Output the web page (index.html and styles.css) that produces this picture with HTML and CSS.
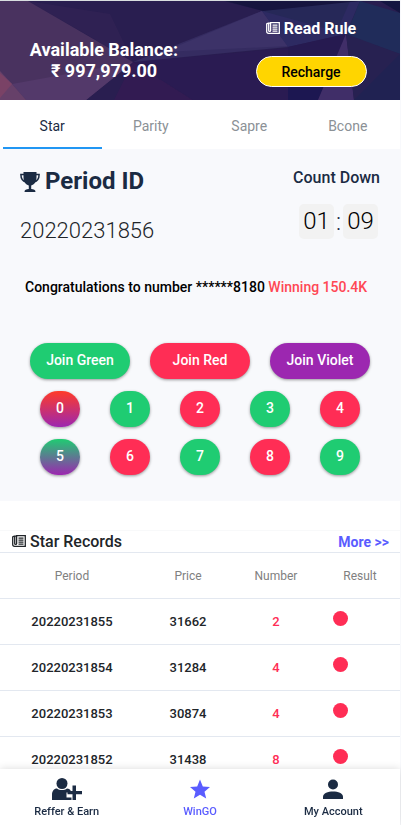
FILE: index.html
```html
<!DOCTYPE html>
<html lang="en">
<head>
<meta charset="utf-8">
<meta name="viewport" content="width=device-width, initial-scale=1">
<title>WinGO</title>
<link rel="stylesheet" href="styles.css">
</head>
<body>
<svg class="sprite" aria-hidden="true">
  <symbol id="news" viewBox="0 0 14 12">
    <path fill="none" stroke="currentColor" stroke-width="1.300" d="M4.600 9V.7h8.700v10.600H2.500C1.300 11.300.7 10.500.7 9.500V2l1.500-.8h2.400M2.700 1.500v7c0 1.200 1.900 1.200 1.900 0"/>
    <path fill="none" stroke="currentColor" stroke-width="1.200" d="M6.500 3.200h5M6.500 5.200h5M6.500 7.200h5M6.500 9.200h5"/>
  </symbol>
</svg>
<header class="hero">
  <svg class="hero-art" viewBox="0 0 400 99" preserveAspectRatio="none" aria-hidden="true">
    <path fill="#291e50" d="M0 0h400v99H0z"/>
    <path fill="#49325f" d="M0 0h28l105 61-47 38H0z"/>
    <path fill="#3c295a" d="M28 0l56 32 49 29-23-48z" opacity=".35"/>
    <path fill="#53396a" d="M12 83l121-22-47 38H26z"/>
    <path fill="#664069" d="M0 70l12 13 14 16H0z"/>
    <path fill="#7a4266" d="M0 72l12 11-12 14z"/>
    <path fill="#321b52" d="M133 61l60 38h-79z"/>
    <path fill="#2a1b52" d="M133 61l155-14v52h-95z"/>
    <path fill="#352c61" d="M133 61L262 10l26 36z"/>
    <path fill="#3c3268" d="M163 51l99-41 26 35z"/>
    <path fill="#201b4b" d="M224 0h156l-117 10z"/>
    <path fill="#2d2a62" d="M262 10L360 0l-14 33-58 13z"/>
    <path fill="#262858" d="M262 10l84 23-6-10 10-23z"/>
    <path fill="#16153f" d="M226 0h134l-97 10z"/>
    <path fill="#202c5a" d="M360 0l40 12v41l-54-19z"/>
    <path fill="#141641" d="M380 0h20v12z"/>
    <path fill="#261a50" d="M288 46l58-13-28 66h-30z"/>
    <path fill="#1c1751" d="M288 60l42 10-12 29h-30z"/>
    <path fill="#402e68" d="M346 33l8 66h-36z"/>
    <path fill="#272151" d="M346 33l54 20v46h-46z"/>
    <path fill="#202252" d="M400 53v46h-46z"/>
  </svg>
  <div class="balance"><span>Available Balance:</span><span>₹ 997,979.00</span></div>
  <div class="hero-side">
    <a class="rule" href="#rule"><svg class="news"><use href="#news"/></svg>Read Rule</a>
    <button class="recharge" type="button">Recharge</button>
  </div>
</header>
<nav class="tabs">
  <a class="tab active" href="#star">Star</a>
  <a class="tab" href="#parity">Parity</a>
  <a class="tab" href="#sapre">Sapre</a>
  <a class="tab" href="#bcone">Bcone</a>
</nav>
<main>
  <section class="game">
    <div class="round">
      <div>
        <h1 class="period"><svg class="trophy" viewBox="0 0 20 20"><path fill="currentColor" d="M3.500 0h13v5.500c0 4-2.300 7.300-5.300 8V17c2.500 0 4.300.8 4.300 3h-11c0-2.200 1.800-3 4.300-3v-3.500c-3-.7-5.300-4-5.300-8z"/><path fill="none" stroke="currentColor" stroke-width="1.500" d="M4 2.600H.9C.9 6.500 2.500 9.200 6 10M16 2.600h3.100C19.100 6.500 17.500 9.200 14 10"/></svg>Period ID</h1>
        <p class="period-id">20220231856</p>
      </div>
      <div class="countdown">
        <h2>Count Down</h2>
        <div class="clock"><span>01</span>:<span>09</span></div>
      </div>
    </div>
    <p class="congrats">Congratulations to number ******8180 <span>Winning 150.4K</span></p>
    <div class="joins">
      <button class="chip green" type="button">Join Green</button>
      <button class="chip red" type="button">Join Red</button>
      <button class="chip violet" type="button">Join Violet</button>
    </div>
    <div class="numbers">
      <button class="chip red-violet" type="button">0</button>
      <button class="chip green" type="button">1</button>
      <button class="chip red" type="button">2</button>
      <button class="chip green" type="button">3</button>
      <button class="chip red" type="button">4</button>
      <button class="chip green-violet" type="button">5</button>
      <button class="chip red" type="button">6</button>
      <button class="chip green" type="button">7</button>
      <button class="chip red" type="button">8</button>
      <button class="chip green" type="button">9</button>
    </div>
  </section>
  <section class="records">
    <div class="records-head">
      <h2><svg class="news"><use href="#news"/></svg>Star Records</h2>
      <a href="#more">More &gt;&gt;</a>
    </div>
    <table>
      <thead><tr><th class="c-period">Period</th><th class="c-price">Price</th><th class="c-number">Number</th><th class="c-result">Result</th></tr></thead>
      <tbody>
        <tr><td>20220231855</td><td>31662</td><td class="num">2</td><td class="res"><span class="dot"></span></td></tr>
        <tr><td>20220231854</td><td>31284</td><td class="num">4</td><td class="res"><span class="dot"></span></td></tr>
        <tr><td>20220231853</td><td>30874</td><td class="num">4</td><td class="res"><span class="dot"></span></td></tr>
        <tr><td>20220231852</td><td>31438</td><td class="num">8</td><td class="res"><span class="dot"></span></td></tr>
      </tbody>
    </table>
  </section>
</main>
<nav class="bottom">
  <a href="#refer"><svg viewBox="0 0 30 24"><g fill="currentColor"><circle cx="10" cy="6.500" r="5.500"/><path d="M0 23v-5c0-4 2-6.500 5-6.500 2.500 2 7.500 2 10 0 1.500 0 2.800.7 3.800 2h-.3v2h-4v5h5V23z"/><path d="M20.500 8.500h3.500v5.500h6v3.200h-6V23h-3.500v-5.800h-5V14h5z"/></g></svg>Reffer &amp; Earn</a>
  <a class="on" href="#wingo"><svg viewBox="0 0 30 24"><path fill="currentColor" d="M15 2.500l2.800 6.900 7.200.6-5.500 4.800 1.700 6.700L15 17.800l-6.200 3.700 1.700-6.700L5 10l7.200-.6z"/></svg>WinGO</a>
  <a href="#account"><svg viewBox="0 0 30 24"><g fill="currentColor"><circle cx="15" cy="7.500" r="5"/><path d="M5 22v-2c0-4 5-5.500 10-5.500S25 16 25 20v2z"/></g></svg>My Account</a>
</nav>
</body>
</html>
```
FILE: styles.css
```css
* { box-sizing: border-box; }
body {
  margin: 0;
  padding-right: 1px;
  height: 100vh;
  overflow: hidden;
  background: linear-gradient(to left, #f8f9fc 1px, #fff 1px);
  color: #212529;
  font-family: Roboto, "Liberation Sans", sans-serif;
}
h1, h2, p { margin: 0; }
a { color: inherit; text-decoration: none; }
button { font-family: inherit; border: 0; padding: 0; cursor: pointer; }
.sprite { display: none; }
.news { width: 14px; height: 12px; margin-right: 4px; }

.hero {
  position: relative;
  display: flex;
  height: 100px;
  border-top: 1px solid #d9dee0;
  color: #fff;
}
.hero-art { position: absolute; inset: 0; width: 100%; height: 100%; }
.balance, .hero-side { position: relative; display: flex; flex-direction: column; align-items: center; }
.balance { flex: none; width: 52%; padding-top: 38px; font-size: 18px; line-height: 21px; font-weight: 700; }
.hero-side { flex: 1; padding: 18px 0 0 14px; gap: 17px; }
.rule { font-size: 16px; line-height: 20px; font-weight: 700; }
.recharge {
  width: 111px; height: 31px;
  border: 1px solid #fff; border-radius: 16px;
  background: #ffd500; color: #000;
  font-size: 14px; font-weight: 500;
}

.tabs { display: flex; padding: 0 3px; }
.tab {
  flex: 1;
  height: 49px;
  border-bottom: 2px solid transparent;
  text-align: center;
  font-size: 14px; line-height: 52px;
  color: #8b9196;
}
.tab.active { color: #1b2b43; border-color: #2196f3; }

.game { background: #f8f9fc; padding: 18px 20px 26px; }
.round { display: flex; justify-content: space-between; }
.period { display: flex; align-items: center; gap: 5px; color: #1b2b43; font-size: 24px; line-height: 29px; font-weight: 700; }
.trophy { width: 20px; height: 20px; }
.period-id { margin-top: 20px; font-size: 22px; line-height: 30px; font-weight: 300; color: #212529; }
.countdown { text-align: center; color: #1b2b43; }
.countdown h2 { font-size: 16px; line-height: 21px; font-weight: 500; }
.clock { display: flex; justify-content: flex-end; align-items: center; gap: 2px; margin-top: 16px; padding-right: 2px; font-size: 24px; font-weight: 300; }
.clock span { width: 35px; border-radius: 5px; background: #f2f2f2; color: #000; line-height: 35px; }
.congrats { margin-top: 31px; padding-left: 5px; font-size: 14px; line-height: 20px; font-weight: 500; color: #000; }
.congrats span { color: #ff4754; }
.joins { display: grid; grid-template-columns: repeat(3, 100px); justify-content: space-between; padding: 0 10px; margin-top: 46px; }
.numbers { display: grid; grid-template-columns: repeat(5, 40px); justify-content: space-between; row-gap: 12px; padding: 0 20px; margin-top: 12px; }
.chip { height: 36px; padding-bottom: 2px; border-radius: 18px; color: #fff; font-size: 14px; font-weight: 500; box-shadow: 0 1px 3px rgba(0, 0, 0, .4); }
.green { background: #1fcc72; }
.red { background: #ff2d55; }
.violet { background: #9c27b0; }
.red-violet { background: linear-gradient(#ff3b28, #9c27b0); }
.green-violet { background: linear-gradient(#1fcc72, #9c27b0); }

.records { margin-top: 29px; border-top: 1px solid #f8f9fa; }
.records-head { display: flex; justify-content: space-between; align-items: center; height: 21px; padding: 0 11px 0 12px; }
.records-head h2 { font-size: 16px; line-height: 21px; font-weight: 500; }
.records-head a { color: #5a5cff; font-size: 14px; font-weight: 700; }
table { width: 100%; border-collapse: collapse; table-layout: fixed; }
th, td { height: 46px; padding: 0; border-top: 1px solid #e3e8f0; text-align: center; }
th { font-size: 12px; font-weight: 400; color: #808080; }
td { font-size: 13px; font-weight: 500; }
.c-period { width: 36%; }
.c-price { width: 22%; }
.c-number { width: 22%; }
.num { color: #ff2d55; }
.res { text-align: left; padding-left: 13px; vertical-align: top; }
.dot { display: block; width: 15px; height: 15px; margin-top: 12px; border-radius: 50%; background: #ff2d55; }

.bottom {
  position: fixed; bottom: 0; left: 0; right: 1px;
  display: flex;
  height: 56px;
  background: #fff;
  box-shadow: 0 0 8px rgba(0, 0, 0, .15);
  color: #1b2b43;
}
.bottom a { flex: 1; display: flex; flex-direction: column; align-items: center; padding-top: 8px; font-size: 11px; line-height: 22px; font-weight: 500; }
.bottom svg { width: 30px; height: 24px; }
.bottom .on { color: #5a5cff; }
```
